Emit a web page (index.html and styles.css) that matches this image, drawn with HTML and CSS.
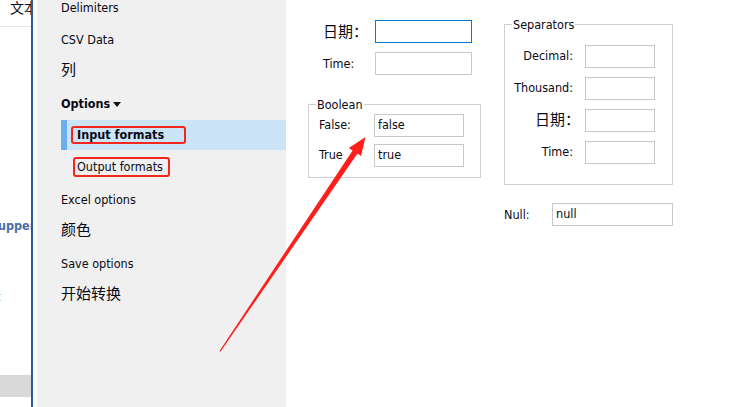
FILE: index.html
```html
<!DOCTYPE html>
<html>
<head>
<meta charset="utf-8">
<link rel="stylesheet" href="styles.css">
</head>
<body>
<div class="app">
  <div class="strip">
    <div class="strip-top">文本</div>
    <div class="strip-upper">upper</div>
    <div class="strip-t">t</div>
    <div class="strip-gray"></div>
  </div>
  <div class="spacer"></div>
  <nav class="sidebar">
    <div class="nav-list">
      <div class="item">Delimiters</div>
      <div class="item">CSV Data</div>
      <div class="item cjk">列</div>
      <div class="item bold">Options <span class="caret"></span></div>
      <div class="sub selected"><span class="mark mark-in">Input formats</span></div>
      <div class="sub"><span class="mark mark-out">Output formats</span></div>
      <div class="item">Excel options</div>
      <div class="item cjk">颜色</div>
      <div class="item">Save options</div>
      <div class="item cjk">开始转换</div>
    </div>
  </nav>
  <main class="main">
    <div class="col col-left">
      <div class="row">
        <label class="lbl cjk">日期：</label>
        <div class="input wide focused"></div>
      </div>
      <div class="row">
        <label class="lbl">Time:</label>
        <div class="input wide"></div>
      </div>
      <div class="group boolean">
        <span class="legend">Boolean</span>
        <div class="grow">
          <label class="blbl">False:</label>
          <div class="input mid">false</div>
        </div>
        <div class="grow">
          <label class="blbl">True</label>
          <div class="input mid">true</div>
        </div>
      </div>
    </div>
    <div class="col col-right">
      <div class="group seps">
        <span class="legend">Separators</span>
        <div class="srow"><label class="slbl">Decimal:</label><div class="input small"></div></div>
        <div class="srow"><label class="slbl">Thousand:</label><div class="input small"></div></div>
        <div class="srow"><label class="slbl cjk">日期：</label><div class="input small"></div></div>
        <div class="srow"><label class="slbl">Time:</label><div class="input small"></div></div>
      </div>
      <div class="nullrow">
        <label class="nlbl">Null:</label>
        <div class="input null">null</div>
      </div>
    </div>
  </main>
  <svg class="arrow" width="749" height="407" viewBox="0 0 749 407">
    <polygon points="219.5,351 220.6,351.6 357.5,153.5 361,156 365.5,137 348.8,148 352.6,150.6" fill="#ff1f1a"/>
  </svg>
</div>
</body>
</html>
```

FILE: styles.css
```css
html, body {
  margin: 0;
  padding: 0;
  background: #fff;
}
body {
  font-family: "DejaVu Sans", sans-serif;
  font-stretch: condensed;
  font-size: 12.5px;
  color: #0a0a14;
  width: 749px;
  height: 407px;
  overflow: hidden;
}
.cjk {
  font-family: "Noto Sans CJK SC", "Noto Sans", sans-serif;
  font-size: 15px;
}
.app {
  position: relative;
  display: flex;
  height: 407px;
}
.strip {
  width: 31px;
  border-right: 2px solid #1f5c99;
  display: flex;
  flex-direction: column;
  overflow: hidden;
  flex: none;
}
.strip-top {
  height: 26px;
  border-bottom: 1px solid #e6e6e6;
  padding-left: 10px;
  font-family: "Noto Sans CJK SC", sans-serif;
  font-size: 14px;
  line-height: 14px;
  white-space: nowrap;
}
.strip-upper {
  margin-top: 192px;
  line-height: 14px;
  font-weight: bold;
  color: #4a6ea8;
  white-space: nowrap;
  margin-left: -2px;
}
.strip-t {
  margin-top: 57px;
  line-height: 14px;
  color: #2448a0;
  margin-left: -4px;
}
.strip-gray {
  margin-top: 71px;
  height: 22px;
  background: #d9d9d9;
}
.spacer {
  width: 4px;
  flex: none;
}
.sidebar {
  width: 249px;
  flex: none;
  background: #f0f0f0;
}
.nav-list {
  margin-top: -9px;
  display: flex;
  flex-direction: column;
}
.item {
  height: 32px;
  box-sizing: border-box;
  display: flex;
  align-items: center;
  padding-left: 24px;
  white-space: nowrap;
}
.item.cjk {
  font-size: 15px;
  padding-bottom: 5px;
}
.bold {
  font-weight: bold;
}
.caret {
  display: inline-block;
  width: 0;
  height: 0;
  border-left: 4px solid transparent;
  border-right: 4px solid transparent;
  border-top: 5px solid #111;
  margin-left: 3px;
  margin-top: 2px;
}
.sub {
  height: 32px;
  display: flex;
  align-items: center;
  margin-left: 24px;
  white-space: nowrap;
}
.sub.selected {
  height: 30px;
  margin-top: 1px;
  margin-bottom: 1px;
  border-left: 6px solid #6aaef0;
  background: #cce4f7;
  font-weight: bold;
}
.mark {
  display: inline-block;
  border: 2px solid #f5261d;
  border-radius: 3px;
  box-sizing: border-box;
}
.mark-in {
  margin-left: 4px;
  width: 115px;
  height: 18px;
  line-height: 14px;
  padding-left: 4px;
}
.mark-out {
  margin-left: 12px;
  width: 97px;
  height: 20px;
  line-height: 16px;
  padding-left: 2px;
}
.main {
  flex: 1;
  background: #fff;
  padding: 20px 0 0 22px;
  display: flex;
  gap: 24px;
  align-items: flex-start;
}
.col {
  display: flex;
  flex-direction: column;
}
.col-left {
  width: 172px;
}
.row {
  display: flex;
  align-items: center;
  height: 23px;
  margin-bottom: 9px;
}
.lbl {
  width: 52px;
  padding-left: 15px;
  flex: none;
}
.lbl.cjk {
  padding-bottom: 2px;
}
.input {
  box-sizing: border-box;
  border: 1px solid #c8c8c8;
  height: 23px;
  line-height: 19px;
  padding-left: 3px;
  background: #fff;
  flex: none;
}
.input.focused {
  border-color: #0078d7;
}
.wide {
  width: 97px;
}
.group {
  position: relative;
  border: 1px solid #d0d0d0;
  box-sizing: border-box;
}
.legend {
  position: absolute;
  top: -8px;
  left: 7px;
  background: #fff;
  padding: 0 1px;
  line-height: 15px;
}
.boolean {
  margin-top: 20px;
  width: 173px;
  height: 74px;
  padding: 9px 0 0 10px;
  display: flex;
  flex-direction: column;
  gap: 7px;
}
.grow {
  display: flex;
  align-items: center;
  height: 23px;
}
.blbl {
  width: 55px;
  flex: none;
  padding-bottom: 2px;
}
.mid {
  width: 90px;
}
.col-right {
  width: 169px;
  margin-top: 4px;
}
.seps {
  width: 169px;
  height: 161px;
  padding-top: 20px;
  display: flex;
  flex-direction: column;
  gap: 9px;
}
.srow {
  display: flex;
  align-items: center;
  height: 23px;
}
.slbl {
  width: 68px;
  text-align: right;
  margin-right: 12px;
  flex: none;
  padding-bottom: 3px;
}
.slbl.cjk {
  width: 75px;
  margin-right: 5px;
  padding-bottom: 5px;
}
.small {
  width: 70px;
}
.nullrow {
  margin-top: 18px;
  display: flex;
  align-items: center;
  height: 23px;
}
.nlbl {
  width: 48px;
  flex: none;
}
.null {
  width: 121px;
}
.arrow {
  position: absolute;
  left: 0;
  top: 0;
  pointer-events: none;
}
```
